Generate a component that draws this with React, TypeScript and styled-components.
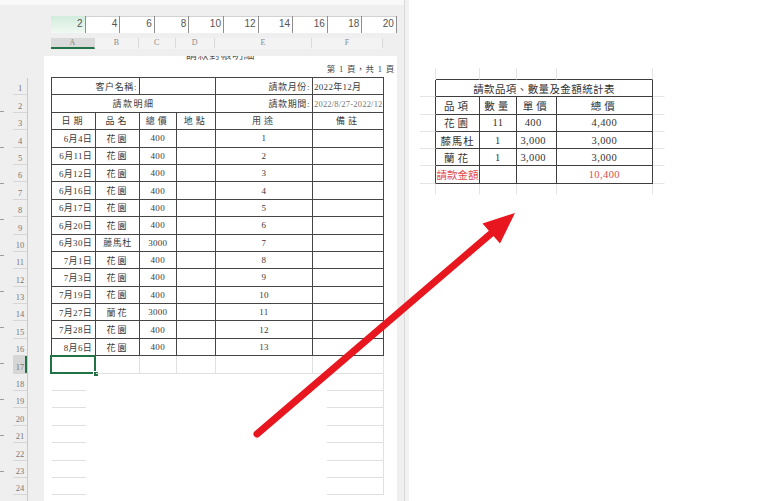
import React from "react";
import styled, { createGlobalStyle } from "styled-components";

const SERIF = `"Liberation Serif", "Noto Sans CJK TC", serif`;

const GlobalStyle = createGlobalStyle`
  html, body { margin: 0; padding: 0; background: #ffffff; }
  body { overflow: hidden; font-family: ${SERIF}; }
`;

const COL_WIDTHS = [44, 44, 36.5, 39.5, 97, 71];
const COL_TEMPLATE = COL_WIDTHS.map((w) => `${w}px`).join(" ");
const COL_LETTERS = ["A", "B", "C", "D", "E", "F"];
const GREEN = "#217346";

type Align = "left" | "center" | "right";
const justify = (a?: Align) => (a === "left" ? "flex-start" : a === "right" ? "flex-end" : "center");

/* ---------- frame ---------- */
const Screen = styled.div`
  position: relative;
  width: 780px;
  height: 501px;
  display: flex;
  overflow: hidden;
  background: #ffffff;
`;

const SheetPane = styled.div`
  width: 404px;
  flex: none;
  display: flex;
  flex-direction: column;
  background: #efefef;
  overflow: hidden;
`;

const TopStrip = styled.div`
  height: 5px;
  flex: none;
  background: #f9f9f9;
`;

const Ruler = styled.div`
  margin: 11px 0 0 51px;
  height: 17px;
  width: fit-content;
  flex: none;
  display: flex;
  background: #ffffff;
  box-shadow: inset 0 1px 0 #d2d2d2;
`;

const RulerSeg = styled.div<{ $active?: boolean }>`
  width: 34.6px;
  flex: none;
  box-sizing: border-box;
  border-right: 1px solid #8e8e8e;
  display: flex;
  align-items: center;
  justify-content: flex-end;
  padding: 0 2px 2px 0;
  font: 10px "Liberation Sans", Arial, sans-serif;
  color: #555;
  background: ${(p) => (p.$active ? "linear-gradient(180deg, #d2ecdc 0%, #f0f9f3 100%)" : "transparent")};
`;

const ColHeaderRow = styled.div`
  margin: 5px 0 0 51px;
  height: 11px;
  flex: none;
  display: flex;
`;

const ColHeader = styled.div<{ $w: number; $active?: boolean }>`
  width: ${(p) => p.$w}px;
  flex: none;
  box-sizing: border-box;
  border-right: 1px solid #d9d9d9;
  border-bottom: 2px solid ${(p) => (p.$active ? GREEN : "transparent")};
  background: ${(p) => (p.$active ? "#dadada" : "#f3f3f3")};
  font: 8px ${SERIF};
  color: #8a8a8a;
  line-height: 10px;
  text-align: center;
`;

const SheetBody = styled.div`
  margin-top: 7px;
  flex: 1;
  display: flex;
  min-height: 0;
`;

const Gutter = styled.div`
  width: 44px;
  flex: none;
  display: flex;
`;

const TickRail = styled.div`
  width: 13px;
  flex: none;
  padding-top: 55px;
  display: flex;
  flex-direction: column;
`;

const Tick = styled.div`
  width: 4px;
  height: 36px;
  flex: none;
  box-sizing: border-box;
  border-top: 1px solid #9c9c9c;
`;

const RowHeads = styled.div`
  width: 14px;
  flex: none;
  margin-top: 22px;
  border-right: 1px solid #c9c9c9;
  display: flex;
  flex-direction: column;
`;

const RowHead = styled.div<{ $active?: boolean }>`
  height: 17.4px;
  flex: none;
  box-sizing: border-box;
  border-bottom: 1px solid #d6d6d6;
  display: flex;
  align-items: flex-end;
  justify-content: center;
  padding-bottom: 1px;
  font: 8.5px ${SERIF};
  line-height: 9px;
  color: #777;
  background: ${(p) => (p.$active ? "#d6d6d6" : "transparent")};
  box-shadow: ${(p) => (p.$active ? `inset -2px 0 0 ${GREEN}` : "none")};
`;

const Page = styled.div`
  width: 353px;
  flex: none;
  background: #ffffff;
  overflow: hidden;
  display: flex;
  flex-direction: column;
`;

const PageHead = styled.div`
  height: 21px;
  flex: none;
  display: flex;
  flex-direction: column;
`;

const PageTitle = styled.div`
  margin-top: -6px;
  height: 11px;
  line-height: 11px;
  font-size: 11px;
  letter-spacing: 0.5px;
  color: #555;
  text-align: center;
`;

const PageNo = styled.div`
  margin-top: 4px;
  padding-right: 2px;
  text-align: right;
  font-size: 8.5px;
  line-height: 9px;
  letter-spacing: 0.8px;
  color: #444;
  white-space: pre;
`;

/* ---------- ledger table ---------- */
const Ledger = styled.div`
  margin-left: 7px;
  width: fit-content;
  display: grid;
  grid-template-columns: ${COL_TEMPLATE};
  grid-auto-rows: 17.4px;
  border-top: 1px solid #454545;
  border-left: 1px solid #454545;
`;

const LedgerCell = styled.div<{ $span?: number; $align?: Align; $spacing?: number; $pad?: number }>`
  grid-column: span ${(p) => p.$span ?? 1};
  box-sizing: border-box;
  border-right: 1px solid #454545;
  border-bottom: 1px solid #454545;
  display: flex;
  align-items: center;
  justify-content: ${(p) => justify(p.$align)};
  padding: 0 ${(p) => p.$pad ?? 2}px;
  font-size: 9px;
  letter-spacing: ${(p) => p.$spacing ?? 0.3}px;
  color: #3a3a3a;
  white-space: nowrap;
  overflow: visible;
`;

const ClippedNote = styled.span`
  display: block;
  width: 76px;
  overflow: hidden;
  font-size: 8.5px;
  color: #777;
  letter-spacing: 0.2px;
`;

const SheetRows = styled.div`
  margin-left: 8px;
  display: grid;
  grid-template-columns: ${COL_TEMPLATE};
  grid-auto-rows: 17.4px;
`;

const GridCell = styled.div`
  position: relative;
  box-sizing: border-box;
  border-right: 1px solid #e0e0e0;
  border-bottom: 1px solid #e0e0e0;
`;

const BlankRow = styled.div`
  grid-column: 1 / -1;
  box-sizing: border-box;
  border-right: 1px solid #e0e0e0;
  border-bottom: 1px solid #e0e0e0;
`;

const Selection = styled.div`
  position: absolute;
  top: -1px;
  left: -2px;
  right: -1px;
  bottom: -1px;
  border: 2px solid ${GREEN};
`;

const Handle = styled.div`
  position: absolute;
  right: -4px;
  bottom: -4px;
  width: 4px;
  height: 4px;
  background: ${GREEN};
  border: 1px solid #fff;
`;

const PaneEdge = styled.div`
  width: 4px;
  flex: none;
  background: #f1f1f1;
  border-left: 1px solid #d9d9d9;
`;

/* ---------- summary image ---------- */
const ImagePane = styled.div`
  flex: 1;
  background: #ffffff;
  padding: 68px 0 0 11px;
`;

type Edge = "dark" | "faint" | "none";
const edge = (e: Edge) =>
  e === "dark" ? "1px solid #3e3e3e" : e === "faint" ? "1px solid #e4e4e4" : "1px solid transparent";

const SumGrid = styled.div`
  width: fit-content;
  display: grid;
  grid-template-columns: 16px 44px 36.7px 40px 96.3px 12px;
  grid-template-rows: 12px repeat(6, 17.3px) 11px;
`;

const SumCell = styled.div<{
  $right: Edge;
  $bottom: Edge;
  $span?: number;
  $red?: boolean;
  $spacing?: number;
  $shift?: number;
}>`
  grid-column: span ${(p) => p.$span ?? 1};
  box-sizing: border-box;
  border-right: ${(p) => edge(p.$right)};
  border-bottom: ${(p) => edge(p.$bottom)};
  display: flex;
  align-items: center;
  justify-content: center;
  padding-right: ${(p) => p.$shift ?? 0}px;
  font-size: 10.5px;
  letter-spacing: ${(p) => p.$spacing ?? 0.3}px;
  color: ${(p) => (p.$red ? "#e24a4a" : "#333")};
  white-space: nowrap;
`;

/* ---------- overlays ---------- */
const WhiteOut = styled.div`
  position: absolute;
  left: 86px;
  top: 379px;
  width: 241px;
  height: 122px;
  background: #ffffff;
`;

const ArrowLayer = styled.svg`
  position: absolute;
  left: 0;
  top: 0;
  pointer-events: none;
`;

/* ---------- data ---------- */
const entries: [string, string, string, string][] = [
  ["6月4日", "花園", "400", "1"],
  ["6月11日", "花園", "400", "2"],
  ["6月12日", "花園", "400", "3"],
  ["6月16日", "花園", "400", "4"],
  ["6月17日", "花園", "400", "5"],
  ["6月20日", "花園", "400", "6"],
  ["6月30日", "藤馬杜", "3000", "7"],
  ["7月1日", "花園", "400", "8"],
  ["7月3日", "花園", "400", "9"],
  ["7月19日", "花園", "400", "10"],
  ["7月27日", "蘭花", "3000", "11"],
  ["7月28日", "花園", "400", "12"],
  ["8月6日", "花園", "400", "13"],
];

const summary: { cells: string[]; red?: boolean; head?: boolean }[] = [
  { cells: ["品項", "數量", "單價", "總價"], head: true },
  { cells: ["花園", "11", "400", "4,400"] },
  { cells: ["藤馬杜", "1", "3,000", "3,000"] },
  { cells: ["蘭花", "1", "3,000", "3,000"] },
  { cells: ["請款金額", "", "", "10,400"], red: true },
];

const rulerNums = ["2", "4", "6", "8", "10", "12", "14", "16", "18", "20"];

const sumSpacing = (c: string, i: number, head?: boolean) => {
  if (head) return 3;
  if (i === 0 && c.length <= 2) return 3;
  if (i === 0 && c.length === 3) return 0.8;
  if (i === 0) return 0;
  return 0.4;
};

function SummaryTable() {
  return (
    <SumGrid>
      {/* top margin row */}
      <SumCell $right="faint" $bottom="none" />
      {[0, 1, 2, 3].map((i) => (
        <SumCell key={`t${i}`} $right="faint" $bottom="dark" />
      ))}
      <SumCell $right="none" $bottom="none" />

      {/* title */}
      <SumCell $right="dark" $bottom="faint" />
      <SumCell $span={4} $right="dark" $bottom="dark" $spacing={0.4}>
        請款品項、數量及金額統計表
      </SumCell>
      <SumCell $right="none" $bottom="faint" />

      {summary.map((row, r) => (
        <React.Fragment key={r}>
          <SumCell $right="dark" $bottom="faint" />
          {row.cells.map((c, i) => (
            <SumCell
              key={i}
              $right="dark"
              $bottom="dark"
              $red={row.red}
              $spacing={sumSpacing(c, i, row.head)}
              $shift={i === 2 && !row.head ? 6 : 0}
            >
              {c}
            </SumCell>
          ))}
          <SumCell $right="none" $bottom="faint" />
        </React.Fragment>
      ))}

      {/* bottom margin row */}
      <SumCell $right="faint" $bottom="none" />
      {[0, 1, 2, 3].map((i) => (
        <SumCell key={`b${i}`} $right="faint" $bottom="none" />
      ))}
      <SumCell $right="none" $bottom="none" />
    </SumGrid>
  );
}

export default function App() {
  return (
    <>
      <GlobalStyle />
      <Screen>
        <SheetPane>
          <TopStrip />
          <Ruler>
            {rulerNums.map((n, i) => (
              <RulerSeg key={n} $active={i === 0}>
                {n}
              </RulerSeg>
            ))}
          </Ruler>
          <ColHeaderRow>
            {COL_LETTERS.map((l, i) => (
              <ColHeader key={l} $w={COL_WIDTHS[i]} $active={i === 0}>
                {l}
              </ColHeader>
            ))}
          </ColHeaderRow>
          <SheetBody>
            <Gutter>
              <TickRail>
                {Array.from({ length: 11 }).map((_, i) => (
                  <Tick key={i} />
                ))}
              </TickRail>
              <RowHeads>
                {Array.from({ length: 24 }).map((_, i) => (
                  <RowHead key={i} $active={i === 16}>
                    {i + 1}
                  </RowHead>
                ))}
              </RowHeads>
            </Gutter>
            <Page>
              <PageHead>
                <PageTitle>請款對帳明細</PageTitle>
                <PageNo>第 1 頁，共 1 頁</PageNo>
              </PageHead>
              <Ledger>
                <LedgerCell $span={2} $align="right" $spacing={0.6}>
                  客户名稱:
                </LedgerCell>
                <LedgerCell $span={2} />
                <LedgerCell $align="right" $spacing={0.6}>
                  請款月份:
                </LedgerCell>
                <LedgerCell $align="left" $pad={1}>
                  2022年12月
                </LedgerCell>

                <LedgerCell $span={4} $spacing={1.5}>
                  請款明細
                </LedgerCell>
                <LedgerCell $align="right" $spacing={0.6}>
                  請款期間:
                </LedgerCell>
                <LedgerCell $align="left" $pad={1}>
                  <ClippedNote>2022/8/27-2022/12/08</ClippedNote>
                </LedgerCell>

                {["日期", "品名", "總價", "地點", "用途", "備註"].map((h) => (
                  <LedgerCell key={h} $spacing={3}>
                    {h}
                  </LedgerCell>
                ))}

                {entries.map(([d, item, price, use]) => (
                  <React.Fragment key={d}>
                    <LedgerCell $align="right" $pad={3}>
                      {d}
                    </LedgerCell>
                    <LedgerCell $spacing={item.length > 2 ? 0.5 : 2}>{item}</LedgerCell>
                    <LedgerCell>{price}</LedgerCell>
                    <LedgerCell />
                    <LedgerCell>{use}</LedgerCell>
                    <LedgerCell />
                  </React.Fragment>
                ))}
              </Ledger>
              <SheetRows>
                <GridCell>
                  <Selection />
                  <Handle />
                </GridCell>
                <GridCell />
                <GridCell />
                <GridCell />
                <GridCell />
                <GridCell />
                {Array.from({ length: 7 }).map((_, i) => (
                  <BlankRow key={i} />
                ))}
              </SheetRows>
            </Page>
          </SheetBody>
        </SheetPane>
        <PaneEdge />
        <ImagePane>
          <SummaryTable />
        </ImagePane>

        <WhiteOut />
        <ArrowLayer width="780" height="501" viewBox="0 0 780 501">
          <line x1="257" y1="434" x2="494" y2="231" stroke="#e8171f" strokeWidth="7" strokeLinecap="round" />
          <polygon points="515,213 482.5,223.5 500,243.5" fill="#e8171f" />
        </ArrowLayer>
      </Screen>
    </>
  );
}
